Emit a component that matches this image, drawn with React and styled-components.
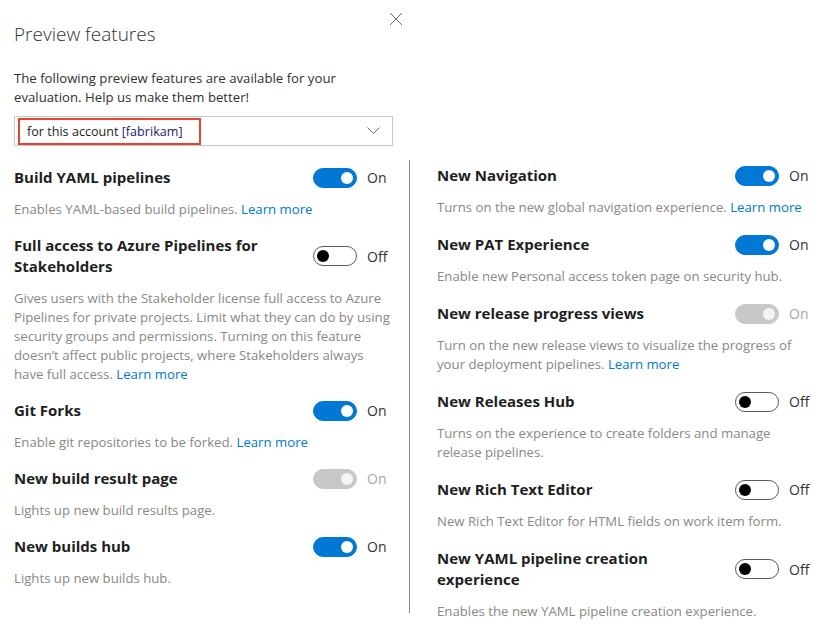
import React from 'react';
import styled, { createGlobalStyle } from 'styled-components';

const GlobalStyle = createGlobalStyle`
  html, body {
    margin: 0;
    padding: 0;
    background: #ffffff;
  }
  body {
    font-family: "Open Sans", "Noto Sans", sans-serif;
    color: #201f1e;
  }
`;

const leftFeatures = [
  {
    title: 'Build YAML pipelines',
    on: true,
    text: 'Enables YAML-based build pipelines.',
    link: true,
  },
  {
    title: 'Full access to Azure Pipelines for Stakeholders',
    on: false,
    text:
      'Gives users with the Stakeholder license full access to Azure Pipelines for private projects. Limit what they can do by using security groups and permissions. Turning on this feature doesn\u2019t affect public projects, where Stakeholders always have full access.',
    link: true,
  },
  {
    title: 'Git Forks',
    on: true,
    text: 'Enable git repositories to be forked.',
    link: true,
  },
  {
    title: 'New build result page',
    on: true,
    disabled: true,
    text: 'Lights up new build results page.',
  },
  {
    title: 'New builds hub',
    on: true,
    text: 'Lights up new builds hub.',
  },
];

const rightFeatures = [
  {
    title: 'New Navigation',
    on: true,
    text: 'Turns on the new global navigation experience.',
    link: true,
  },
  {
    title: 'New PAT Experience',
    on: true,
    text: 'Enable new Personal access token page on security hub.',
  },
  {
    title: 'New release progress views',
    on: true,
    disabled: true,
    text: 'Turn on the new release views to visualize the progress of your deployment pipelines.',
    link: true,
  },
  {
    title: 'New Releases Hub',
    on: false,
    text: 'Turns on the experience to create folders and manage release pipelines.',
  },
  {
    title: 'New Rich Text Editor',
    on: false,
    text: 'New Rich Text Editor for HTML fields on work item form.',
  },
  {
    title: 'New YAML pipeline creation experience',
    on: false,
    text: 'Enables the new YAML pipeline creation experience.',
  },
];

const Toggle = ({ on, disabled }) => (
  <ToggleWrap>
    <Track $on={on} $disabled={disabled}>
      <Knob $on={on} $disabled={disabled} />
    </Track>
    <ToggleLabel $disabled={disabled}>{on ? 'On' : 'Off'}</ToggleLabel>
  </ToggleWrap>
);

const Feature = ({ item }) => (
  <Item>
    <ItemHead>
      <ItemTitle>{item.title}</ItemTitle>
      <Toggle on={item.on} disabled={item.disabled} />
    </ItemHead>
    <ItemText>
      {item.text}
      {item.link && (
        <>
          {' '}
          <LearnMore href="#">Learn more</LearnMore>
        </>
      )}
    </ItemText>
  </Item>
);

const App = () => {
  return (
    <Panel>
      <GlobalStyle />
      <Header>
        <Title>Preview features</Title>
        <CloseButton aria-label="Close">
          <svg width="14" height="14" viewBox="0 0 14 14">
            <path d="M1 1 L13 13 M13 1 L1 13" stroke="#6b6b6b" strokeWidth="1" fill="none" />
          </svg>
        </CloseButton>
      </Header>
      <Intro>
        The following preview features are available for your evaluation. Help us make them
        better!
      </Intro>
      <Select>
        <SelectValue>
          for this account <Account>[fabrikam]</Account>
        </SelectValue>
        <svg width="13" height="8" viewBox="0 0 13 8">
          <path d="M0.5 0.5 L6.5 6.5 L12.5 0.5" stroke="#6b6b6b" strokeWidth="1" fill="none" />
        </svg>
      </Select>
      <Columns>
        <Column $width={380} $top={7} $gap={16}>
          {leftFeatures.map((f) => (
            <Feature key={f.title} item={f} />
          ))}
        </Column>
        <Divider />
        <Column $width={379} $top={5} $gap={17}>
          {rightFeatures.map((f) => (
            <Feature key={f.title} item={f} />
          ))}
        </Column>
      </Columns>
    </Panel>
  );
};

const Panel = styled.div`
  width: 820px;
  height: 629px;
  box-sizing: border-box;
  padding: 0 0 0 14px;
  overflow: hidden;
`;

const Header = styled.div`
  display: flex;
  width: 390px;
  justify-content: space-between;
  align-items: flex-start;
  padding-top: 21px;
`;

const Title = styled.h1`
  margin: 0;
  font-size: 19px;
  font-weight: 300;
  line-height: 27px;
  color: #333333;
`;

const CloseButton = styled.button`
  border: 0;
  background: none;
  padding: 0;
  margin-top: -10px;
  width: 16px;
  height: 16px;
  display: flex;
  align-items: center;
  justify-content: center;
`;

const Intro = styled.p`
  margin: 21px 0 0;
  width: 360px;
  font-size: 13.2px;
  line-height: 19px;
  color: #323130;
`;

const Select = styled.div`
  margin-top: 9px;
  width: 379px;
  height: 30px;
  box-sizing: border-box;
  border: 1px solid #c8c8c8;
  display: flex;
  align-items: center;
  justify-content: space-between;
  padding: 0 12px 0 3px;
`;

const SelectValue = styled.div`
  border: 2px solid #e8412f;
  width: 183px;
  height: 27px;
  box-sizing: border-box;
  display: flex;
  align-items: center;
  padding: 0 0 0 7px;
  font-size: 12.6px;
  color: #201f1e;
  white-space: pre;
`;

const Account = styled.span`
  color: #1a1a6e;
`;

const Columns = styled.div`
  display: flex;
  margin-top: 14px;
`;

const Column = styled.div`
  width: ${(p) => p.$width}px;
  padding-top: ${(p) => p.$top}px;
  display: flex;
  flex-direction: column;
  gap: ${(p) => p.$gap}px;
`;

const Divider = styled.div`
  width: 1px;
  height: 453px;
  background: #8a8a8a;
  margin: 0 27px 0 15px;
`;

const Item = styled.div``;

const ItemHead = styled.div`
  display: flex;
  align-items: center;
  justify-content: space-between;
  gap: 16px;
`;

const ItemTitle = styled.div`
  max-width: 260px;
  font-size: 15px;
  font-weight: 700;
  line-height: 21px;
  color: #201f1e;
`;

const ItemText = styled.div`
  margin-top: 12px;
  font-size: 13.2px;
  line-height: 19px;
  color: #8a8886;
`;

const LearnMore = styled.a`
  color: #0078d4;
  text-decoration: none;
`;

const ToggleWrap = styled.div`
  display: flex;
  align-items: center;
  flex-shrink: 0;
  margin-right: 5px;
`;

const Track = styled.div`
  width: 44px;
  height: 20px;
  box-sizing: border-box;
  border-radius: 10px;
  display: flex;
  align-items: center;
  padding: 0 3px;
  justify-content: ${(p) => (p.$on ? 'flex-end' : 'flex-start')};
  background: ${(p) => (p.$disabled ? '#c8c8c8' : p.$on ? '#0078d4' : '#ffffff')};
  border: 1px solid ${(p) => (p.$disabled ? '#c8c8c8' : p.$on ? '#0078d4' : '#5a5a5a')};
`;

const Knob = styled.div`
  width: 12px;
  height: 12px;
  border-radius: 50%;
  background: ${(p) => (p.$disabled ? '#f4f4f4' : p.$on ? '#ffffff' : '#000000')};
`;

const ToggleLabel = styled.span`
  width: 22px;
  margin-left: 10px;
  font-size: 14px;
  color: ${(p) => (p.$disabled ? '#a6a6a6' : '#323130')};
`;

export default App;
